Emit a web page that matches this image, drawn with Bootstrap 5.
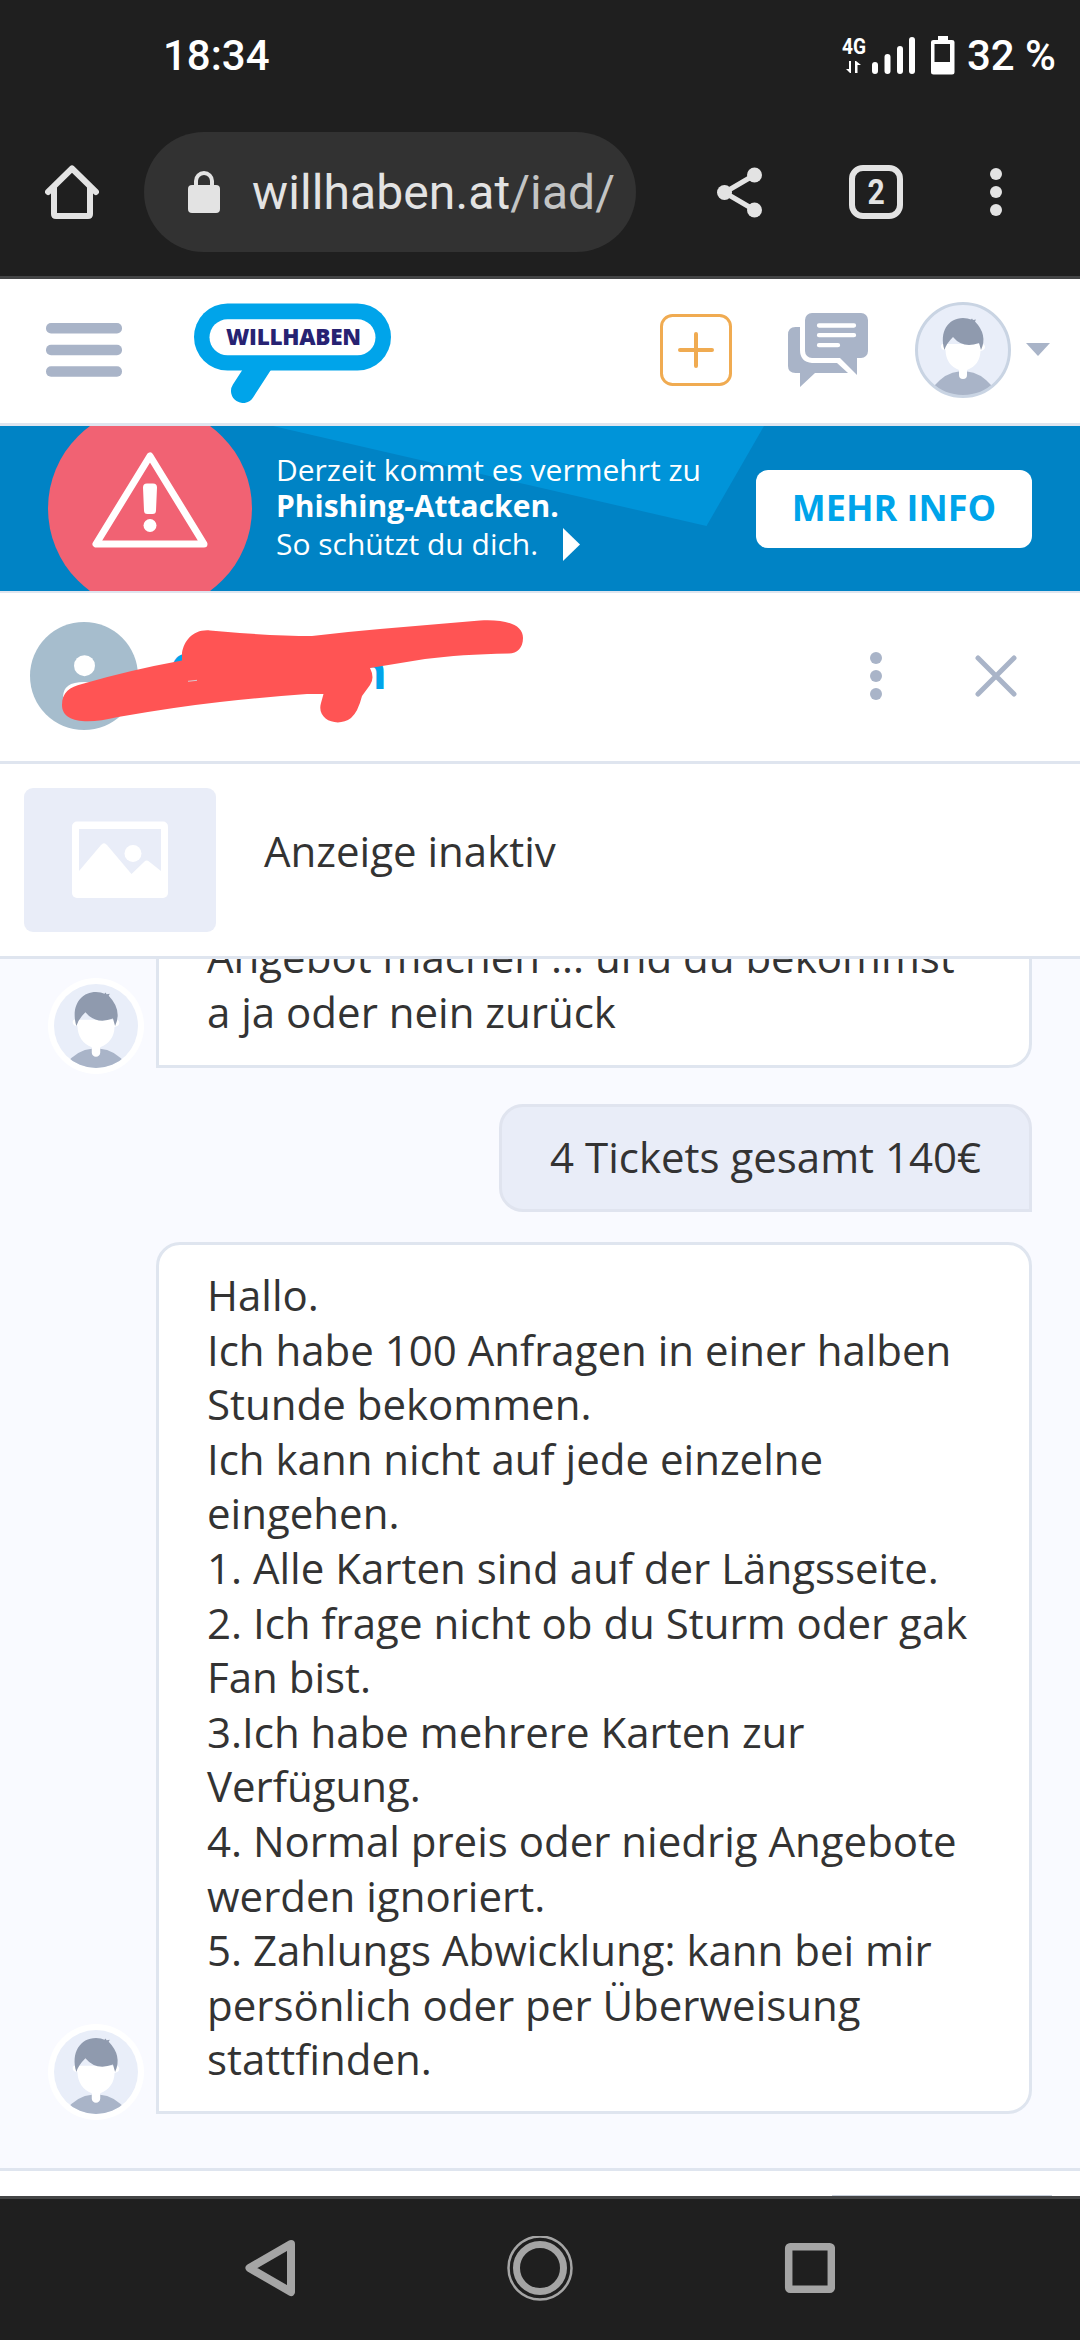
<!DOCTYPE html>
<html lang="de">
<head>
<meta charset="utf-8">
<title>willhaben Nachrichten</title>
<link href="https://cdn.jsdelivr.net/npm/bootstrap@5.3.0/dist/css/bootstrap.min.css" rel="stylesheet">
<style>
html, body { height: 2340px; overflow: hidden; }
body { width: 1080px; background: #fff; color: #333; font-family: "Open Sans", sans-serif; font-size: 42px; line-height: 54.6px; }
svg { display: block; flex: none; }
.sysfont { font-family: Roboto, sans-serif; }
.statusbar { height: 112px; background: #1f1f1f; color: #fff; padding: 0 24px 0 163px; font-size: 42px; font-weight: 500; }
.browserbar { height: 167px; background: #1f1f1f; border-bottom: 3px solid #444546; padding: 20px 78px 24px 45px; }
.urlpill { width: 492px; height: 120px; background: #323232; color: #e3e3e3; padding-left: 44px; margin-left: 45px; font-size: 48px; letter-spacing: .1px; }
.urltext { margin-left: 32px; padding-top: 3px; }
.urlpath { color: #c3c4c4; }
.tabbox { width: 54px; height: 54px; border: 6px solid #e3e3e3; border-radius: 14px; color: #e3e3e3; font-size: 35px; font-weight: 700; line-height: 44px; }
.tabbox span { transform: scaleX(.86); }
.sitehead { height: 147px; border-bottom: 3px solid #dfe5ef; padding: 0 30px 3px 46px; }
.logo { margin: 7px 0 0 72px; }
.promo { height: 167px; background: #0083c5; border-bottom: 2px solid #dfe5ef; padding-right: 48px; color: #fff; }
.promo-copy { font-size: 30px; margin: 26px 0 0 276px; line-height: 36px; }
.promo-last { margin-top: 2px; }
.promo .btn { width: 276px; height: 78px; border-radius: 12px; background: #fff; color: #00a4ea; font-size: 36px; font-weight: 700; padding: 0; line-height: 74px; margin-top: 44px; }
.userbar { height: 171px; border-bottom: 3px solid #dfe5ef; padding: 0 63px 3px 30px; }
.nick { color: #00a4ea; font-weight: 700; font-size: 48px; width: 218px; margin-left: 31px; line-height: 54px; margin-top: -10px; }
.adbar { height: 195px; border-bottom: 3px solid #dfe5ef; padding: 0 24px; gap: 48px; }
.adtitle { margin-top: -18px; }
.chatpane { height: 1212px; background: #f9faff; border-bottom: 3px solid #dfe5ef; padding: 0 48px 54px; }
.msgrow { gap: 12px; }
.msgrow svg { margin-bottom: -6px; }
.gap-after-in { margin-bottom: 36px; }
.gap-after-out { margin-bottom: 30px; }
.bubble { border: 3px solid #dfe5ef; background: #fff; padding: 23px 30px 24px 48px; white-space: pre-line; border-radius: 24px 24px 24px 0; }
.bubble.cut { border-top: 0; border-radius: 0 0 24px 0; padding-bottom: 25px; }
.bubble.mine { background: #e9edf8; border-color: #e0e4ef; border-radius: 24px 24px 0 24px; padding: 23px 48px 25px; }
.composer { height: 25px; }
.inputedge { width: 220px; height: 1px; background: #c9d0da; margin-right: 28px; }
.sysnav { height: 144px; background: #1f1f1f; border-top: 3px solid #444546; padding-top: 37px; }
</style>
</head>
<body class="d-flex flex-column">
<svg width="0" height="0" class="position-absolute">
  <defs>
    <g id="person">
      <path fill="#a9b4c8" d="M-30 37Q-17 22-4 21.500H4Q17 22 30 37V52H-30Z"/>
      <path fill="#fff" d="M-17.500 0Q-22 0-22-3.500T-18-6L18-6Q22-6 22-3T17.500 1Q17 15 4 20V25a4 4 0 0 1-8 0V20Q-17 15-17.500 0Z"/>
      <path fill="#8f9aae" d="M-18.500 0C-24-18-15-32 0-32Q5-32 8-30.500L9-31.500 10-30 13-30.500 12-28.500Q25-15 18 0L16-7Q0-1-10-13-17-6-18.500 0Z"/>
    </g>
    <clipPath id="c42"><circle r="42"/></clipPath>
    <clipPath id="c46"><circle r="46"/></clipPath>
    <g id="chatface"><circle r="48" fill="#fff"/><circle r="42" fill="#e9eef9"/><g clip-path="url(#c42)"><use href="#person" transform="scale(1.06)"/></g></g>
  </defs>
</svg>

<header class="statusbar sysfont d-flex align-items-center justify-content-between">
  <span>18:34</span>
  <div class="d-flex align-items-center">
    <svg width="116" height="44" viewBox="840 32 116 44" fill="#fff">
      <text x="843" y="52" font-size="22.500" font-weight="700" textLength="24" lengthAdjust="spacingAndGlyphs">4G</text>
      <path d="M850 59h2v12h-1l-4-4h3zM856 71V59h1l5 4h-3.500v8z"/>
      <rect x="873" y="60" width="6" height="12" rx="3"/><rect x="885.500" y="52" width="6" height="20" rx="3"/><rect x="898" y="44" width="6" height="28" rx="3"/><rect x="910" y="35" width="6" height="37" rx="3"/>
      <path fill-rule="evenodd" d="M939 34h10v4h4q2.500 0 2.500 2v30q0 2.500-2.500 2.500h-18.500q-2.500 0-2.500-2.500V40q0-2 2.500-2h4.500zM935.500 42v18h15.500V42z"/>
    </svg>
    <span class="ms-2 ps-1">32 %</span>
  </div>
</header>

<nav class="browserbar sysfont d-flex align-items-center">
  <svg width="54" height="54" viewBox="0 0 54 54" fill="none" stroke="#e3e3e3" stroke-width="6" stroke-linecap="round" stroke-linejoin="round"><path d="M3 27 27 3.500 51 27M9 22v27q0 2 2 2h32q2 0 2-2V22"/></svg>
  <div class="urlpill rounded-pill d-flex align-items-center">
    <svg width="32" height="42" viewBox="0 0 32 42"><rect y="14" width="32" height="28" rx="4" fill="#e3e3e3"/><path d="M8 16V10a8 8 0 0 1 16 0v6" fill="none" stroke="#e3e3e3" stroke-width="4"/></svg>
    <span class="urltext">willhaben.at<span class="urlpath">/iad/</span></span>
  </div>
  <div class="d-flex align-items-center justify-content-between flex-fill" style="margin-left:81px">
    <svg width="45" height="51" viewBox="0 0 45 51" fill="#e3e3e3"><path d="M37.500 8 7.500 25.500l30 17.500" fill="none" stroke="#e3e3e3" stroke-width="5"/><circle cx="37.500" cy="8" r="7.500"/><circle cx="7.500" cy="25.500" r="7.500"/><circle cx="37.500" cy="43" r="7.500"/></svg>
    <div class="tabbox d-flex justify-content-center"><span>2</span></div>
    <svg width="12" height="48" viewBox="0 0 12 48" fill="#e3e3e3"><circle cx="6" cy="6" r="6"/><circle cx="6" cy="24" r="6"/><circle cx="6" cy="42" r="6"/></svg>
  </div>
</nav>

<div class="sitehead d-flex align-items-center">
  <svg width="76" height="54" viewBox="0 0 76 54" fill="#a9b4c8"><rect width="76" height="10.500" rx="5"/><rect y="21.700" width="76" height="10.500" rx="5"/><rect y="43.300" width="76" height="10.500" rx="5"/></svg>
  <svg class="logo" width="197" height="100" viewBox="194 303 197 100">
    <path d="M265 357 243 391" stroke="#00a4ea" stroke-width="24" stroke-linecap="round"/>
    <rect x="194" y="303.500" width="197" height="67" rx="33.500" fill="#00a4ea"/><rect x="209.500" y="319.300" width="166" height="36" rx="18" fill="#fff"/>
    <text x="226" y="345" font-size="22.500" font-weight="800" fill="#272272" textLength="135" lengthAdjust="spacing">WILLHABEN</text>
  </svg>
  <svg class="ms-auto" width="72" height="72" viewBox="0 0 72 72" fill="none" stroke="#f0ab51"><rect x="1.500" y="1.500" width="69" height="69" rx="11" stroke-width="3"/><path d="M36 20v32M20 36h32" stroke-width="4" stroke-linecap="round"/></svg>
  <svg width="80" height="76" viewBox="0 0 80 76" fill="#a9b4c8" style="margin-left:56px">
    <rect x="17" y="1" width="63" height="45" rx="7"/><path d="M51 45h18v18z"/>
    <path d="M12 15H7.500Q0 15 0 23V54q0 7 7.500 7H12V75L27 61H60L49 51H24Q12 50 12 38Z"/>
    <path d="M31 13.500H66M31 23.200H66M31 33.200H50" stroke="#fff" stroke-width="4.300" stroke-linecap="round"/>
  </svg>
  <svg width="96" height="96" viewBox="-48 -48 96 96" style="margin-left:47px"><circle r="46.500" fill="#e9eef9"/><g clip-path="url(#c46)"><use href="#person"/></g><circle r="46.500" fill="none" stroke="#c9d4e3" stroke-width="3"/></svg>
  <svg width="24" height="13" viewBox="0 0 24 13" style="margin-left:15px"><path d="M0 0h24L12 13z" fill="#a9b4c8"/></svg>
</div>

<div class="promo d-flex justify-content-between align-items-start position-relative">
  <svg class="position-absolute top-0 start-0" width="1080" height="165" viewBox="0 426 1080 165">
    <path d="M273 426 706.500 526 764 426Z" fill="#0094d9"/><circle cx="150" cy="508.500" r="102" fill="#f16273"/>
    <path d="M150 456 96 544H204Z" fill="none" stroke="#fff" stroke-width="7" stroke-linejoin="round"/>
    <path d="M147 483.500h6q4 0 4 4l-1 23q0 3.500-3.500 3.500h-5q-3.500 0-3.500-3.500l-1-23q0-4 4-4z" fill="#fff"/><circle cx="150" cy="525.500" r="6.500" fill="#fff"/>
  </svg>
  <div class="promo-copy position-relative text-nowrap">
    <div>Derzeit kommt es vermehrt zu</div>
    <div class="fw-bold">Phishing-Attacken.</div>
    <div class="promo-last d-flex align-items-center">So schützt du dich.<svg width="17" height="33" viewBox="0 0 17 33" style="margin-left:25px"><path d="M0 0 17 16.500 0 33z" fill="#fff"/></svg></div>
  </div>
  <a class="btn position-relative" href="#">MEHR INFO</a>
</div>

<div class="userbar d-flex align-items-center position-relative">
  <svg width="108" height="108" viewBox="30 623 108 108"><circle cx="84" cy="677" r="54" fill="#a6bdcd"/><circle cx="84.500" cy="666.700" r="10.500" fill="#fff"/><path d="M63 698Q63 683 84 683T106 698Z" fill="#fff"/></svg>
  <div class="nick d-flex justify-content-between"><span>C</span><span>n</span></div>
  <svg class="ms-auto" width="12" height="48" viewBox="0 0 12 48" fill="#a9b4c8"><circle cx="6" cy="6" r="6"/><circle cx="6" cy="24" r="6"/><circle cx="6" cy="42" r="6"/></svg>
  <svg width="42" height="42" viewBox="0 0 42 42" stroke="#a9b4c8" stroke-width="5" stroke-linecap="round" style="margin-left:93px"><path d="M3 3 39 39M39 3 3 39"/></svg>
  <svg class="position-absolute top-0 start-0" width="540" height="168" viewBox="0 593 540 168">
    <path fill="#ff5454" d="M62 705C62 692 70 687 82 684Q130 670 182 660.500V653C184 641 193 629 210 630.500Q270 636 312 636Q345 632 380 629L480 620.500C507 619 523 625 523 638C523 648 517 653.500 509 653.500C475 654 450 656 425 659L370 668Q375 678 370 685L362 696Q358 712 351 718C338 728 316 720 321 703L323.500 694H307Q265 697 220 702T118 717C85 725 62 722 62 705Z"/>
    <path d="M188 681.300 197 680.300" stroke="#d9c9cf" stroke-width="1"/>
  </svg>
</div>

<div class="adbar d-flex align-items-center">
  <svg width="192" height="144" viewBox="24 788 192 144"><rect x="24" y="788" width="192" height="144" rx="9" fill="#e9edf8"/><rect x="72" y="821.500" width="96" height="76.500" rx="5" fill="#fff"/><path d="M79 829h82v42L149 861.500Q146.500 859.500 144 862L131.500 874 107 845Q104 841.500 101 845L79 871Z" fill="#e9edf8"/><circle cx="133" cy="853.500" r="8.500" fill="#fff"/></svg>
  <span class="adtitle">Anzeige inaktiv</span>
</div>

<main class="chatpane d-flex flex-column justify-content-end overflow-hidden">
  <div class="msgrow gap-after-in d-flex align-items-end"><svg width="96" height="96" viewBox="-48 -48 96 96"><use href="#chatface"/></svg><div class="bubble cut flex-fill">Angebot machen ... und du bekommst
a ja oder nein zurück</div></div>
  <div class="bubble mine gap-after-out align-self-end">4 Tickets gesamt 140€</div>
  <div class="msgrow d-flex align-items-end"><svg width="96" height="96" viewBox="-48 -48 96 96"><use href="#chatface"/></svg><div class="bubble flex-fill">Hallo.
Ich habe 100 Anfragen in einer halben
Stunde bekommen.
Ich kann nicht auf jede einzelne
eingehen.
1. Alle Karten sind auf der Längsseite.
2. Ich frage nicht ob du Sturm oder gak
Fan bist.
3.Ich habe mehrere Karten zur
Verfügung.
4. Normal preis oder niedrig Angebote
werden ignoriert.
5. Zahlungs Abwicklung: kann bei mir
persönlich oder per Überweisung
stattfinden.</div></div>
</main>

<div class="composer d-flex align-items-end justify-content-end"><div class="inputedge"></div></div>

<footer class="sysnav d-flex justify-content-center">
  <svg width="590" height="68" viewBox="245 2236 590 68" fill="none" stroke="#a5a5a5">
    <path d="M291 2244 249.500 2268 291 2292Z" stroke-width="8" stroke-linejoin="round"/>
    <circle cx="540" cy="2268" r="31.500" stroke-width="2.500"/><circle cx="540" cy="2268" r="23.500" stroke-width="7"/>
    <rect x="788.700" y="2246.700" width="42.600" height="42.600" rx="1.500" stroke-width="7.500"/>
  </svg>
</footer>
<script src="https://cdn.jsdelivr.net/npm/bootstrap@5.3.0/dist/js/bootstrap.bundle.min.js"></script>
</body>
</html>
